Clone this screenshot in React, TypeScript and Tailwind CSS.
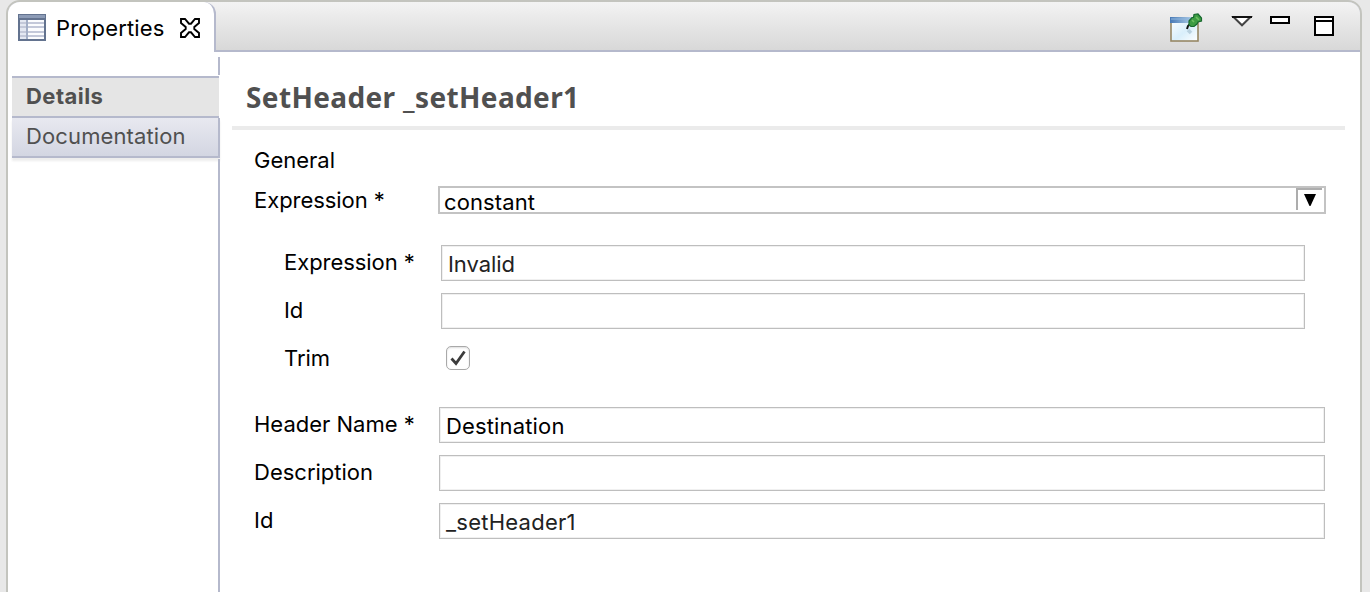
import type { ReactNode } from "react";

function TableIcon() {
  return (
    <svg width="28" height="27" viewBox="0 0 28 27" shapeRendering="crispEdges" className="shrink-0">
      <rect width="28" height="27" fill="#63738f" />
      <rect x="1" y="1" width="26" height="3" fill="#8c9bb6" />
      <rect x="2" y="6" width="24" height="19" fill="#fbfcfe" />
      <rect x="2" y="6" width="7" height="19" fill="#e4e8f2" />
      <path d="M2 9h24M2 13h24M2 18h24M2 22h24" stroke="#c3c8d9" strokeWidth="2" />
      <path d="M9 6v19" stroke="#a3aec6" strokeWidth="2" />
    </svg>
  );
}

function CloseIcon() {
  return (
    <svg width="22" height="22" viewBox="0 0 22 22" fill="#fff" stroke="#000" strokeWidth="1.9" strokeLinejoin="miter" className="shrink-0">
      <path d="M2 2H6L10 6.7H12L16 2H20V6L15.3 10V12L20 16V20H16L12 15.3H10L6 20H2V16L6.7 12V10L2 6Z" />
    </svg>
  );
}

function PinIcon() {
  return (
    <svg width="33" height="29" viewBox="0 0 33 29" className="shrink-0">
      <defs>
        <linearGradient id="bar" x1="0" x2="1"><stop stopColor="#4779b5" /><stop offset="1" stopColor="#c9e2f3" /></linearGradient>
        <linearGradient id="pane" x1="0" x2="1" y1="0" y2="1"><stop stopColor="#fff" /><stop offset=".55" stopColor="#d9effb" /><stop offset="1" stopColor="#fff" /></linearGradient>
      </defs>
      <rect x="1" y="5" width="27" height="23" fill="url(#pane)" stroke="#968765" strokeWidth="1.6" />
      <rect x="0" y="4" width="28" height="6" fill="url(#bar)" />
      <path d="M1 6H22" stroke="#8fb7df" strokeWidth="1" />
      <path d="M18 17L21 20" stroke="#a9c4d4" strokeWidth="3.5" opacity=".7" />
      <path d="M17 16L18 13L21 10" fill="none" stroke="#111" strokeWidth="2" />
      <path d="M19 8L22 4.5H23.500L24 1.500L28 1L31.500 5V8L28 9L27 11L24 13.500H21L19 12Z" fill="#3d9c43" stroke="#17692e" strokeWidth="1.2" />
      <path d="M26 4L29 7M22 7L24 9" stroke="#6fbf62" strokeWidth="1.6" />
    </svg>
  );
}

function Field({ label, children }: { label: string; children: ReactNode }) {
  return (
    <div className="flex h-9">
      <label className="flex w-[185px] shrink-0 items-center pb-0.5 group-[.nested]:w-[157px]">{label}</label>
      {children}
    </div>
  );
}

function Box({ value = "", className }: { value?: string; className: string }) {
  return (
    <div className={`flex h-9 items-center border border-[#bebebe] bg-white pt-0.5 pl-1.5 shadow-[inset_-1px_-1px_0_#f0f0f0,inset_1px_1px_0_#f0f0f0] ${className}`}>
      {value}
    </div>
  );
}

export default function App() {
  return (
    <div className="h-[592px] w-[1370px] overflow-hidden bg-[#e8e8e8] pl-1.5 font-['Inter',sans-serif] text-[22px] leading-7 text-black">
      <div className="flex h-[606px] w-[1356px] flex-col overflow-hidden rounded-t-[14px] border-2 border-[#c3c4be] bg-white">
        <header className="flex h-[50px] shrink-0 bg-[#b5b9cc]">
          <div className="z-10 flex w-[208px] shrink-0 items-start rounded-tr-[12px] border-r-2 border-[#b5b9cc] bg-white pt-3 pl-2.5">
            <TableIcon />
            <span className="ml-2.5 w-[123px] tracking-[0.15px]">Properties</span>
            <div className="mt-[3px]"><CloseIcon /></div>
          </div>
          <div className="mb-0.5 -ml-4 flex flex-1 items-start bg-linear-to-b from-[#f3f3f3] to-[#d8d8d8] pl-[970px]">
            <div className="mt-[11px]"><PinIcon /></div>
            <svg width="22" height="13" viewBox="0 0 22 13" className="mt-[13px] ml-7 shrink-0">
              <path d="M2.500 2H19.500L11 10.300Z" fill="#fff" stroke="#444" strokeWidth="2" />
              <path d="M1 2H21" stroke="#111" strokeWidth="2" />
            </svg>
            <div className="mt-3.5 ml-[17px] h-2 w-5 border-2 border-black bg-white" />
            <div className="mt-3.5 ml-6 h-5 w-5 border-2 border-black bg-white"><div className="mt-0.5 h-0.5 bg-black" /></div>
          </div>
        </header>
        <div className="flex flex-1">
          <nav className="flex w-[212px] flex-col text-[#505050]">
            <div className="mt-[5px] h-[18px] border-r-2 border-[#b5b9cc]" />
            <div className="mt-px mr-px ml-1 h-[42px] border-y-2 border-[#b5b9cc] bg-[#e5e5e5] pt-0.5 pl-3.5 leading-8 font-bold tracking-[0.45px]">Details</div>
            <div className="ml-1 h-10 border-r-2 border-b-2 border-[#b5b9cc] bg-linear-to-b from-[#e8e9f0] to-[#d3d6e2] pt-0.5 pl-3.5 leading-8 tracking-[0.12px] shadow-[0_3px_2px_#ededed]">Documentation</div>
            <div className="mt-px flex-1 border-r-2 border-[#b5b9cc]" />
          </nav>
          <main className="flex flex-1 flex-col">
            <h1 className="mr-[15px] ml-3 h-[78px] border-b-4 border-[#ebebeb] pt-[23px] pl-3.5 font-['Noto_Sans',sans-serif] text-[28px] leading-11 font-bold tracking-[0.37px] text-[#505050]">SetHeader _setHeader1</h1>
            <section className="flex flex-col pt-4 pl-[34px]">
              <h2>General</h2>
              <div className="mt-3 flex h-7">
                <label className="w-[184px] tracking-[-0.05px]">Expression *</label>
                <div className="flex h-7 w-[888px] justify-between border-2 border-[#c3c3c3] pr-0.5 pl-1">
                  <span className="leading-7 tracking-[0.1px]">constant</span>
                  <div className="flex h-[22px] w-[26px] items-center justify-center border-t-2 border-l-2 border-[#adadad]">
                    <svg width="12" height="12" viewBox="0 0 12 12"><path d="M0 0H12L6.5 12H5.5Z" /></svg>
                  </div>
                </div>
              </div>
              <div className="group nested mt-[31px] mb-[30px] ml-[30px] flex flex-col gap-3 tracking-[-0.05px]">
                <Field label="Expression *"><Box value="Invalid" className="w-[864px] text-[#222]" /></Field>
                <Field label="Id"><Box className="w-[864px]" /></Field>
                <Field label="Trim">
                  <div className="mt-[5px] ml-[5px] flex h-6 w-6 items-center justify-center rounded-[5px] border border-[#a9a9a9] bg-white shadow-[inset_0_1px_2px_#ddd]">
                    <svg width="16" height="16" viewBox="0 0 16 16" fill="none" stroke="#3c3c3c" strokeWidth="2.8"><path d="M1.5 8.500L6 13.500L14.500 1.500" /></svg>
                  </div>
                </Field>
              </div>
              <div className="flex flex-col gap-3">
                <Field label="Header Name *"><Box value="Destination" className="w-[886px] tracking-[0.15px]" /></Field>
                <Field label="Description"><Box className="w-[886px]" /></Field>
                <Field label="Id"><Box value="_setHeader1" className="w-[886px] tracking-[0.25px] text-[#222]" /></Field>
              </div>
            </section>
          </main>
        </div>
      </div>
    </div>
  );
}
